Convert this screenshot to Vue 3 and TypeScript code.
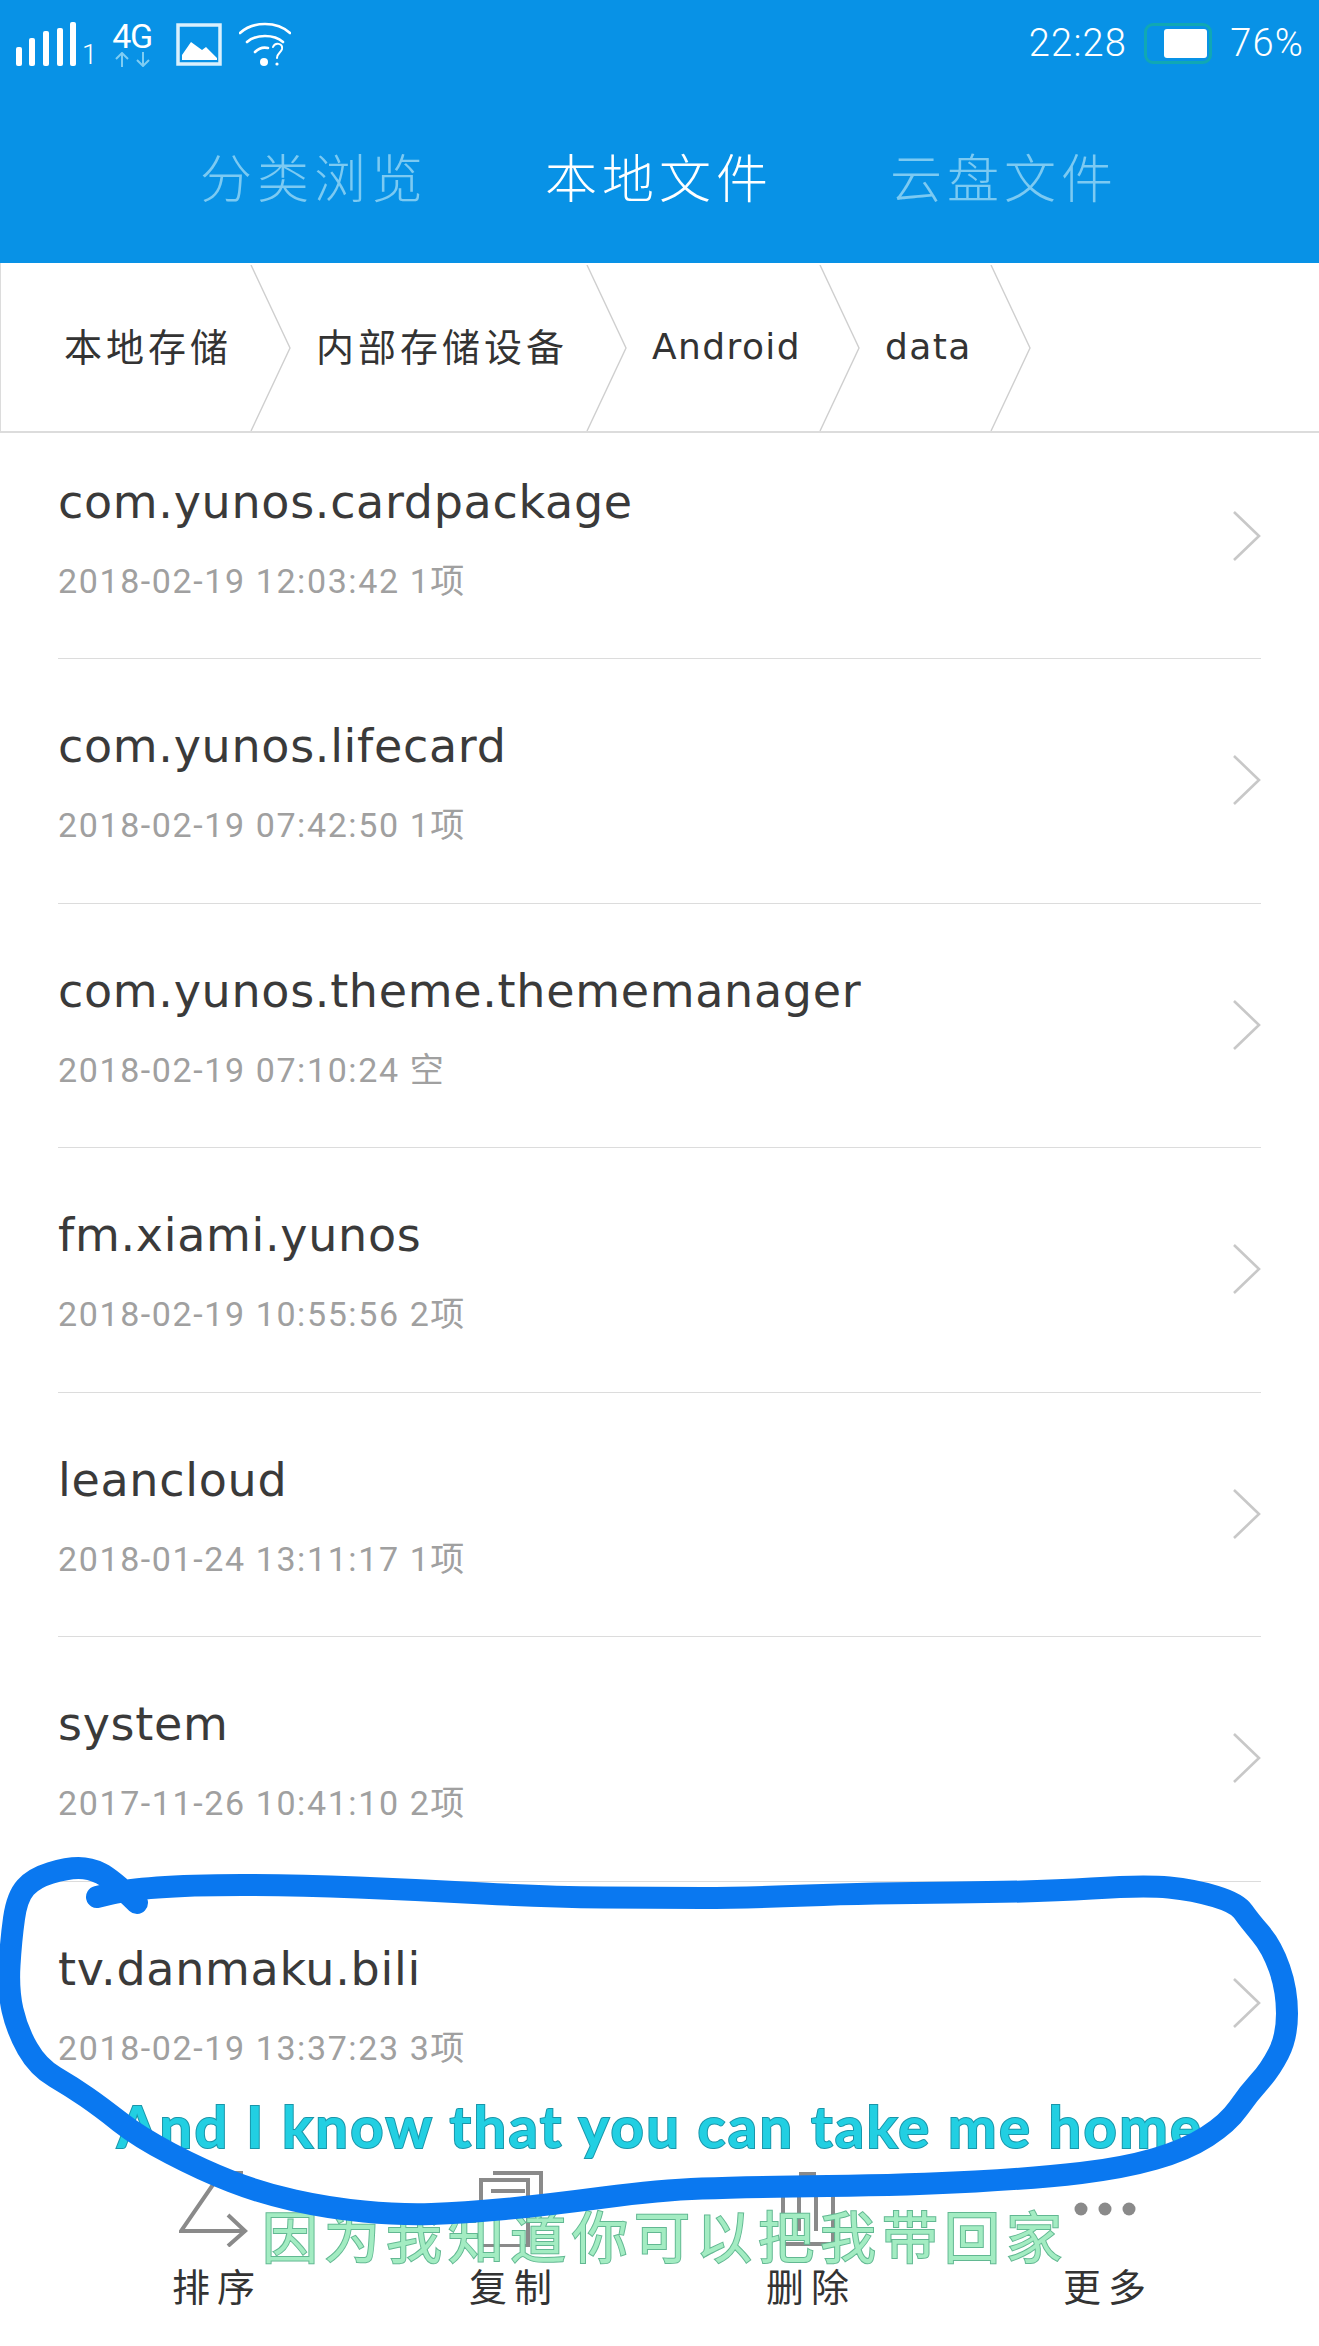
<script setup lang="ts">
import { computed } from 'vue'

interface FileRow {
  name: string
  meta: string
}

const tabs = ['分类浏览', '本地文件', '云盘文件']
const crumbs = ['本地存储', '内部存储设备', 'Android', 'data']

const rows: FileRow[] = [
  { name: 'com.yunos.cardpackage', meta: '2018-02-19 12:03:42 1项' },
  { name: 'com.yunos.lifecard', meta: '2018-02-19 07:42:50 1项' },
  { name: 'com.yunos.theme.thememanager', meta: '2018-02-19 07:10:24 空' },
  { name: 'fm.xiami.yunos', meta: '2018-02-19 10:55:56 2项' },
  { name: 'leancloud', meta: '2018-01-24 13:11:17 1项' },
  { name: 'system', meta: '2017-11-26 10:41:10 2项' },
  { name: 'tv.danmaku.bili', meta: '2018-02-19 13:37:23 3项' },
]

// hand drawn circle round the last row, in page pixels
const scribblePoints: [number, number][] = [
  [137, 1903], [112, 1879], [90, 1868], [67, 1868], [34, 1878], [17, 1897], [11, 1940], [8, 1990],
  [17, 2030], [38, 2067], [72, 2087], [101, 2107], [139, 2137], [202, 2170], [261, 2193], [328, 2208],
  [400, 2215], [463, 2213], [547, 2205], [660, 2190], [744, 2187], [912, 2185], [1039, 2178], [1123, 2168],
  [1186, 2150], [1228, 2123], [1249, 2093], [1270, 2070], [1287, 2037], [1287, 1990], [1272, 1947], [1249, 1920],
  [1237, 1903], [1194, 1890], [1144, 1885], [1039, 1892], [870, 1893], [744, 1898], [660, 1898], [547, 1897],
  [421, 1890], [295, 1885], [189, 1885], [126, 1890], [97, 1897],
]

const scribblePath = computed(() => {
  const pts = scribblePoints
  let d = `M${pts[0][0]} ${pts[0][1]}`
  for (let i = 1; i < pts.length - 1; i++) {
    const mx = (pts[i][0] + pts[i + 1][0]) / 2
    const my = (pts[i][1] + pts[i + 1][1]) / 2
    d += ` Q${pts[i][0]} ${pts[i][1]} ${mx} ${my}`
  }
  const last = pts[pts.length - 1]
  return `${d} L${last[0]} ${last[1]}`
})
</script>

<template>
  <div class="phone">
    <header class="top">
      <div class="status">
        <svg class="signal" width="62" height="44" viewBox="0 0 62 44">
          <rect x="0" y="25" width="6" height="19" rx="2" />
          <rect x="13" y="16" width="6" height="28" rx="2" />
          <rect x="27" y="9" width="6" height="35" rx="2" />
          <rect x="41" y="6" width="6" height="38" rx="2" />
          <rect x="54" y="0" width="6" height="44" rx="2" />
        </svg>
        <span class="sim">1</span>
        <div class="net">
          <span class="net-label">4G</span>
          <svg width="38" height="15" viewBox="0 0 38 15" fill="none" stroke="#7fcdf3" stroke-width="2">
            <path d="M9 15V2M3 7l6-6 6 6M30 0v13M24 8l6 6 6-6" />
          </svg>
        </div>
        <svg class="pic" width="46" height="43" viewBox="0 0 46 43">
          <rect x="2" y="2" width="42" height="39" fill="none" stroke="#d9f0fd" stroke-width="3.5" />
          <path d="M6 37V32L15 19 26 27 30 24 41 35V37Z" fill="#fff" />
        </svg>
        <svg class="wifi" width="52" height="44" viewBox="0 0 52 44" fill="none" stroke="#fff" stroke-width="2.6" stroke-linecap="round">
          <path d="M1 11C14 -1 38 -1 51 11M8 20C17 12 35 12 44 20M16 30C20 26 25 25 29 26" />
          <circle cx="25" cy="40" r="4" fill="#fff" stroke="none" />
          <path d="M34 25C36 20 44 21 43 27 42 31 38 31 38 36" stroke-width="2" />
          <circle cx="38" cy="42" r="1.6" fill="#fff" stroke="none" />
        </svg>
        <div class="status-right">
          <span class="clock">22:28</span>
          <div class="battery"><div class="battery-fill" /></div>
          <span class="percent">76%</span>
        </div>
      </div>
      <nav class="tabs">
        <span
          v-for="(tab, i) in tabs"
          :key="tab"
          class="tab"
          :class="{ active: i === 1 }"
        >{{ tab }}</span>
      </nav>
    </header>

    <div class="crumbs">
      <div
        v-for="crumb in crumbs"
        :key="crumb"
        class="crumb"
      >
        <span>{{ crumb }}</span>
        <svg class="crumb-arrow" width="42" height="166" viewBox="0 0 42 166" fill="none" stroke="#cfcfcf" stroke-width="1.4">
          <path d="M1 0L40 83 1 166" />
        </svg>
      </div>
    </div>

    <main class="list">
      <div
        v-for="row in rows"
        :key="row.name"
        class="row"
      >
        <div class="row-text">
          <div class="row-name">{{ row.name }}</div>
          <div class="row-meta">{{ row.meta }}</div>
        </div>
        <svg class="row-arrow" width="30" height="50" viewBox="0 0 30 50" fill="none" stroke="#c8c8c8" stroke-width="2.6">
          <path d="M2 1L27 25 2 49" />
        </svg>
      </div>
    </main>

    <footer class="bar">
      <div class="action">
        <svg width="70" height="76" viewBox="0 0 70 76" fill="none" stroke="#8a8a8a" stroke-width="4">
          <path d="M64 2H42L2 60H66M49 44L66 60 49 75" />
        </svg>
        <span>排序</span>
      </div>
      <div class="action">
        <svg width="64" height="76" viewBox="0 0 64 76" fill="none" stroke="#8a8a8a" stroke-width="4">
          <path d="M14 2H62V34M2 9H49V75H2ZM12 20H46" />
        </svg>
        <span>复制</span>
      </div>
      <div class="action">
        <svg width="54" height="76" viewBox="0 0 54 76" fill="none" stroke="#8a8a8a" stroke-width="4">
          <path d="M18 3H35M2 14V73H52V14M18 14V60M35 14V60" />
        </svg>
        <span>删除</span>
      </div>
      <div class="action">
        <svg width="64" height="76" viewBox="0 0 64 76" fill="#8a8a8a">
          <circle cx="8" cy="38" r="6.5" />
          <circle cx="32" cy="38" r="6.5" />
          <circle cx="56" cy="38" r="6.5" />
        </svg>
        <span>更多</span>
      </div>
    </footer>

    <div class="caption caption-en">And I know that you can take me home</div>
    <div class="caption caption-cn">因为我知道你可以把我带回家</div>
    <svg class="scribble" width="1319" height="2346" viewBox="0 0 1319 2346" fill="none">
      <path :d="scribblePath" stroke="#0a78f0" stroke-width="22" stroke-linecap="round" stroke-linejoin="round" />
    </svg>
  </div>
</template>

<style scoped>
.phone {
  position: relative;
  width: 1319px;
  height: 2346px;
  overflow: hidden;
  display: flex;
  flex-direction: column;
  background: #fff;
  font-family: "Noto Sans CJK SC", "Noto Sans", sans-serif;
}

.top {
  height: 263px;
  flex: none;
  background: #0892e6;
  color: #fff;
}

.status {
  height: 90px;
  padding: 22px 15px 0 16px;
  box-sizing: border-box;
  display: flex;
  align-items: flex-start;
}

.signal {
  fill: #fff;
}

.sim {
  margin: 22px 0 0 4px;
  font-family: Roboto, sans-serif;
  font-size: 27px;
  line-height: 22px;
  font-weight: 300;
  width: 30px;
}

.net {
  width: 40px;
  display: flex;
  flex-direction: column;
  align-items: center;
}

.net-label {
  font-family: Roboto, sans-serif;
  font-size: 34px;
  line-height: 28px;
  margin-bottom: 2px;
  letter-spacing: -1.5px;
}

.pic {
  margin: 1px 0 0 24px;
}

.wifi {
  margin-left: 17px;
}

.status-right {
  margin-left: auto;
  display: flex;
  align-items: center;
  height: 42px;
  font-family: Roboto, sans-serif;
  font-size: 38px;
  font-weight: 300;
  letter-spacing: 1.2px;
}

.clock {
  margin-right: 17px;
}

.battery {
  width: 68px;
  height: 41px;
  box-sizing: border-box;
  border: 3px solid #10a8b4;
  border-radius: 9px;
  padding: 3px 2px 3px 17px;
  margin-right: 18px;
}

.battery-fill {
  height: 100%;
  background: #fff;
  border-radius: 3px;
}

.tabs {
  display: flex;
  padding-left: 200px;
  gap: 116px;
  margin-top: 56px;
}

.tab {
  font-size: 52px;
  line-height: 60px;
  letter-spacing: 5px;
  width: 229px;
  white-space: nowrap;
  color: #7ccaf2;
  font-weight: 300;
}

.tab.active {
  color: #fff;
}

.crumbs {
  height: 170px;
  flex: none;
  box-sizing: border-box;
  display: flex;
  border-left: 1px solid #dcdcdc;
  border-bottom: 2px solid #dcdcdc;
  padding-left: 63px;
  font-size: 38px;
  letter-spacing: 4px;
  color: #333;
}

.crumb {
  position: relative;
  display: flex;
  align-items: center;
  padding: 0 84px 5px 0;
  box-sizing: border-box;
  white-space: nowrap;
  height: 100%;
}

.crumb:nth-child(3),
.crumb:nth-child(4) {
  font-family: "DejaVu Sans", sans-serif;
  font-size: 36px;
  letter-spacing: 1.4px;
  padding-bottom: 1px;
}

.crumb-arrow {
  position: absolute;
  right: 24px;
  top: 2px;
}

.list {
  flex: 1;
  min-height: 0;
  overflow: hidden;
  padding: 0 58px;
  margin-top: -18.5px;
}

.row {
  height: 244.5px;
  box-sizing: border-box;
  border-bottom: 1.5px solid #dcdcdc;
  display: flex;
  align-items: center;
  justify-content: space-between;
}

.row-name {
  font-family: "DejaVu Sans", sans-serif;
  font-size: 46px;
  line-height: 56px;
  letter-spacing: 0.7px;
  color: #3a3a3a;
}

.row-meta {
  margin-top: 32px;
  font-family: Roboto, "Noto Sans CJK SC", sans-serif;
  font-size: 34px;
  line-height: 38px;
  letter-spacing: 1.6px;
  color: #a0a0a0;
}

.row-text {
  margin-top: 1px;
}

.row-arrow {
  margin-right: -1px;
  margin-top: -1px;
}

.bar {
  height: 221px;
  flex: none;
  display: flex;
  padding: 46px 0 0 65px;
  background: #fff;
  box-sizing: border-box;
}

.action {
  width: 297px;
  display: flex;
  flex-direction: column;
  align-items: center;
  gap: 18px;
  font-size: 38px;
  line-height: 40px;
  letter-spacing: 7px;
  text-indent: 7px;
  color: #333;
}

.scribble {
  position: absolute;
  left: 0;
  top: 0;
}

.caption {
  position: absolute;
  white-space: nowrap;
  paint-order: stroke fill;
}

.caption-en {
  left: 117px;
  top: 2090px;
  font-family: Lato, sans-serif;
  font-weight: 700;
  font-size: 58px;
  line-height: 72px;
  letter-spacing: 2.3px;
  color: #22cfe2;
  -webkit-text-stroke: 2px #1a96aa;
}

.caption-cn {
  left: 262px;
  top: 2204px;
  font-size: 56px;
  line-height: 60px;
  letter-spacing: 6px;
  color: #a3ecc2;
  -webkit-text-stroke: 2px #62b892;
}
</style>
